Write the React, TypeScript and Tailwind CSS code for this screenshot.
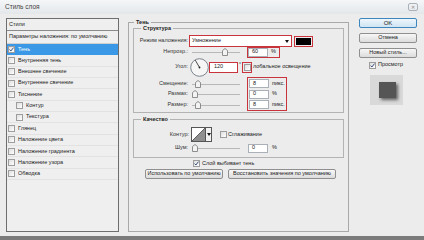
import React from "react";

const RED = "border-[#c9333b]";

function Check({ checked = false }: { checked?: boolean }) {
  return (
    <span className="flex h-[7px] w-[7px] shrink-0 items-center justify-center border border-[#9d9d9d] bg-gradient-to-br from-[#dedede] to-white">
      {checked && (
        <svg width="5" height="5" viewBox="0 0 5 5">
          <path d="M0.6 2.6 L1.9 4 L4.5 0.6" fill="none" stroke="#3a4f7a" strokeWidth="1" />
        </svg>
      )}
    </span>
  );
}

function Slider({ pos }: { pos: number }) {
  return (
    <div className="relative ml-[4px] h-[8px] w-[48px] shrink-0">
      <div className="absolute left-0 right-0 top-[4px] h-px bg-[#b8b8b8]" />
      <svg className="absolute top-0" style={{ left: pos }} width="6" height="8" viewBox="0 0 6 8">
        <path d="M0.5 2.5 L3 0.5 L5.5 2.5 V7.5 H0.5 Z" fill="#f3f3f3" stroke="#8d8d8d" />
      </svg>
    </div>
  );
}

function Field({ value }: { value: string }) {
  return (
    <div className="flex h-[9px] w-[20px] shrink-0 items-center border border-[#a9b0b8] bg-white pl-[3px] text-[5.5px] leading-none">
      {value}
    </div>
  );
}

function Btn({ children, w, primary = false }: { children: React.ReactNode; w: string; primary?: boolean }) {
  return (
    <div
      className={
        "flex h-[10px] shrink-0 items-center justify-center whitespace-nowrap rounded-[2px] border text-[5.5px] leading-none text-[#222] " +
        w +
        (primary
          ? " border-[#3f86bd] bg-gradient-to-b from-[#eef6fc] to-[#cfe4f3] text-[6px]"
          : " border-[#8f8f8f] bg-gradient-to-b from-[#f7f7f7] to-[#dcdcdc]")
      }
    >
      {children}
    </div>
  );
}

const styles = [
  "Внутренняя тень",
  "Внешнее свечение",
  "Внутреннее свечение",
  "Тиснение",
  "Контур",
  "Текстура",
  "Глянец",
  "Наложение цвета",
  "Наложение градиента",
  "Наложение узора",
  "Обводка",
];

function Label({ children, w = "w-[54px]" }: { children: React.ReactNode; w?: string }) {
  return <div className={"shrink-0 whitespace-nowrap text-right text-[5.5px] leading-none text-[#333] " + w}>{children}</div>;
}

export default function App() {
  return (
    <div className="flex h-[240px] w-[424px] flex-col overflow-hidden bg-[#ececec] font-['Liberation_Sans',Arial,sans-serif] text-[#222]">
      {/* заголовок окна */}
      <div className="flex h-[14px] shrink-0 items-center justify-between bg-gradient-to-b from-[#f4f6f8] to-[#e4e7ea] pl-[5px] pr-[6px]">
        <span className="text-[6.5px] leading-none text-[#444]">Стиль слоя</span>
        <div className="flex h-[8px] w-[10px] items-center justify-center rounded-[2px] border border-[#aab1b9] text-[5px] leading-none text-[#8a8a8a]">
          ✕
        </div>
      </div>

      <div className="flex flex-1 pl-[6px]">
        {/* список стилей */}
        <div className="mt-[4px] flex h-[214px] w-[113px] shrink-0 flex-col whitespace-nowrap border border-[#6e6e6e] bg-[#efefef]">
          <div className="flex h-[12px] shrink-0 items-center border-b border-[#8a8a8a] pl-[2px] text-[5.5px] leading-none">Стили</div>
          <div className="flex h-[13px] shrink-0 items-center border-b border-[#d0d0d0] pl-[2px] text-[5.5px] leading-none">
            Параметры наложения: по умолчанию
          </div>
          <div className="flex h-[11.35px] shrink-0 items-center gap-[3px] bg-[#3a98e6] pl-[1px] text-[5.5px] leading-none text-white">
            <Check checked />
            Тень
          </div>
          {styles.map((s) => (
            <div
              key={s}
              className={
                "flex h-[11.35px] shrink-0 items-center gap-[3px] border-b border-[#e2e2e2] text-[5.5px] leading-none " +
                (s === "Контур" || s === "Текстура" ? "pl-[9px]" : "pl-[1px]")
              }
            >
              <Check />
              {s}
            </div>
          ))}
        </div>

        {/* Тень */}
        <fieldset className="ml-[9px] mt-[5px] h-[213px] w-[221px] shrink-0 border border-[#a9a9a9] px-[4px]">
          <legend className="ml-[1px] px-[2px] text-[5.5px] font-bold leading-[6px]">Тень</legend>

          <fieldset className="h-[88px] border border-[#b3b3b3]">
            <legend className="ml-[7px] px-[2px] text-[5.5px] font-bold leading-[6px]">Структура</legend>

            <div className="mt-[4px] flex h-[12px] items-center">
              <Label>Режим наложения:</Label>
              <div className={"ml-[1px] flex h-[12px] w-[103px] items-center justify-between border bg-white px-[2px] " + RED}>
                <span className="text-[5.5px] leading-none">Умножение</span>
                <svg width="4" height="3" viewBox="0 0 4 3">
                  <path d="M0 0 H4 L2 3 Z" fill="#111" />
                </svg>
              </div>
              <div className={"ml-[2px] h-[11px] w-[19px] border p-[1px] " + RED}>
                <div className="h-full w-full bg-black" />
              </div>
            </div>

            <div className="flex h-[10px] items-center">
              <Label>Непрозр.:</Label>
              <Slider pos={30} />
              <div className={"ml-[7px] flex h-[11px] w-[33px] items-center border " + RED}>
                <Field value="60" />
                <span className="ml-[3px] text-[5.5px] leading-none">%</span>
              </div>
            </div>

            <div className="flex h-[20px] items-center">
              <Label>Угол:</Label>
              <svg className="ml-[2px] shrink-0" width="19" height="19" viewBox="0 0 19 19">
                <circle cx="9.5" cy="9.5" r="8.8" fill="#f6f6f6" stroke="#6f7782" strokeWidth="0.9" />
                <path d="M9.5 9.5 L5.3 2.2" stroke="#222" strokeWidth="0.8" />
                <circle cx="9.5" cy="9.5" r="0.9" fill="#222" />
              </svg>
              <div className={"flex h-[11px] w-[29px] shrink-0 items-center border bg-white pl-[4px] text-[5.5px] leading-none " + RED}>
                120
              </div>
              <span className="ml-[1px] self-start pt-[5px] text-[5px] leading-none">°</span>
              <div className={"ml-[1px] flex h-[11px] w-[10px] shrink-0 items-center justify-center border " + RED}>
                <Check />
              </div>
              <span className="ml-[1px] whitespace-nowrap text-[5.5px] leading-none">лобальное освещение</span>
            </div>

            <div className="flex h-[34px]">
              <div className="flex w-[113px] shrink-0 flex-col pt-[1px]">
                <div className="flex h-[11px] items-center">
                  <Label>Смещение:</Label>
                  <Slider pos={3} />
                </div>
                <div className="flex h-[10px] items-center">
                  <Label>Размах:</Label>
                  <Slider pos={0} />
                </div>
                <div className="flex h-[11px] items-center">
                  <Label>Размер:</Label>
                  <Slider pos={3} />
                </div>
              </div>
              <div className={"flex h-[34px] w-[40px] flex-col border " + RED}>
                <div className="flex h-[11px] items-center pl-[1px]">
                  <Field value="8" />
                  <span className="ml-[3px] text-[5.5px] leading-none">пикс.</span>
                </div>
                <div className="flex h-[10px] items-center pl-[1px]">
                  <Field value="0" />
                  <span className="ml-[3px] text-[5.5px] leading-none">%</span>
                </div>
                <div className="flex h-[11px] items-center pl-[1px]">
                  <Field value="8" />
                  <span className="ml-[3px] text-[5.5px] leading-none">пикс.</span>
                </div>
              </div>
            </div>
          </fieldset>

          <fieldset className="mt-[3px] h-[42px] border border-[#b3b3b3]">
            <legend className="ml-[7px] px-[2px] text-[5.5px] font-bold leading-[6px]">Качество</legend>

            <div className="mt-[4px] flex h-[17px] items-center">
              <Label w="w-[55px]">Контур:</Label>
              <div className="ml-[2px] h-[15px] w-[15px] shrink-0 border border-[#555]">
                <svg width="13" height="13" viewBox="0 0 13 13">
                  <rect width="13" height="13" fill="#fff" />
                  <path d="M0 13 L13 0 V13 Z" fill="#8f8f8f" />
                  <path d="M0 13 L13 0" stroke="#333" strokeWidth="0.7" />
                </svg>
              </div>
              <div className="flex h-[15px] w-[6px] shrink-0 items-center justify-center border border-l-0 border-[#555] bg-[#f2f2f2]">
                <svg width="4" height="3" viewBox="0 0 4 3">
                  <path d="M0 0 H4 L2 3 Z" fill="#111" />
                </svg>
              </div>
              <div className="ml-[8px]">
                <Check />
              </div>
              <span className="ml-[1px] text-[5.5px] leading-none">Сглаживание</span>
            </div>

            <div className="flex h-[10px] items-center">
              <Label>Шум:</Label>
              <Slider pos={0} />
              <div className="ml-[8px]">
                <Field value="0" />
              </div>
              <span className="ml-[4px] text-[5.5px] leading-none">%</span>
            </div>
          </fieldset>

          <div className="mt-[1px] flex h-[9px] items-center pl-[60px]">
            <Check checked />
            <span className="ml-[2px] whitespace-nowrap text-[5.5px] leading-none">Слой выбивает тень</span>
          </div>

          <div className="mt-[1px] flex">
            <div className="ml-[12px]">
              <Btn w="w-[78px]">Использовать по умолчанию</Btn>
            </div>
            <div className="ml-[5px]">
              <Btn w="w-[108px]">Восстановить значения по умолчанию</Btn>
            </div>
          </div>
        </fieldset>

        {/* кнопки справа */}
        <div className="ml-[10px] flex w-[58px] shrink-0 flex-col pt-[4px]">
          <Btn w="w-[58px]" primary>
            OK
          </Btn>
          <div className="mt-[5px]">
            <Btn w="w-[58px]">Отмена</Btn>
          </div>
          <div className="mt-[5px]">
            <Btn w="w-[58px]">Новый стиль...</Btn>
          </div>
          <div className="mt-[2px] flex h-[10px] items-center pl-[10px]">
            <Check checked />
            <span className="ml-[2px] text-[5.5px] leading-none">Просмотр</span>
          </div>
          <div className="ml-[11px] mt-[5px] h-[30px] w-[33px] bg-[#d9d9d9] pl-[9px] pt-[7px]">
            <div className="h-[16px] w-[17px] bg-[#555] shadow-[2px_2px_3px_rgba(0,0,0,0.55)]" />
          </div>
        </div>
      </div>

      <div className="h-[4px] shrink-0 bg-[#7b7b7b]" />
    </div>
  );
}
